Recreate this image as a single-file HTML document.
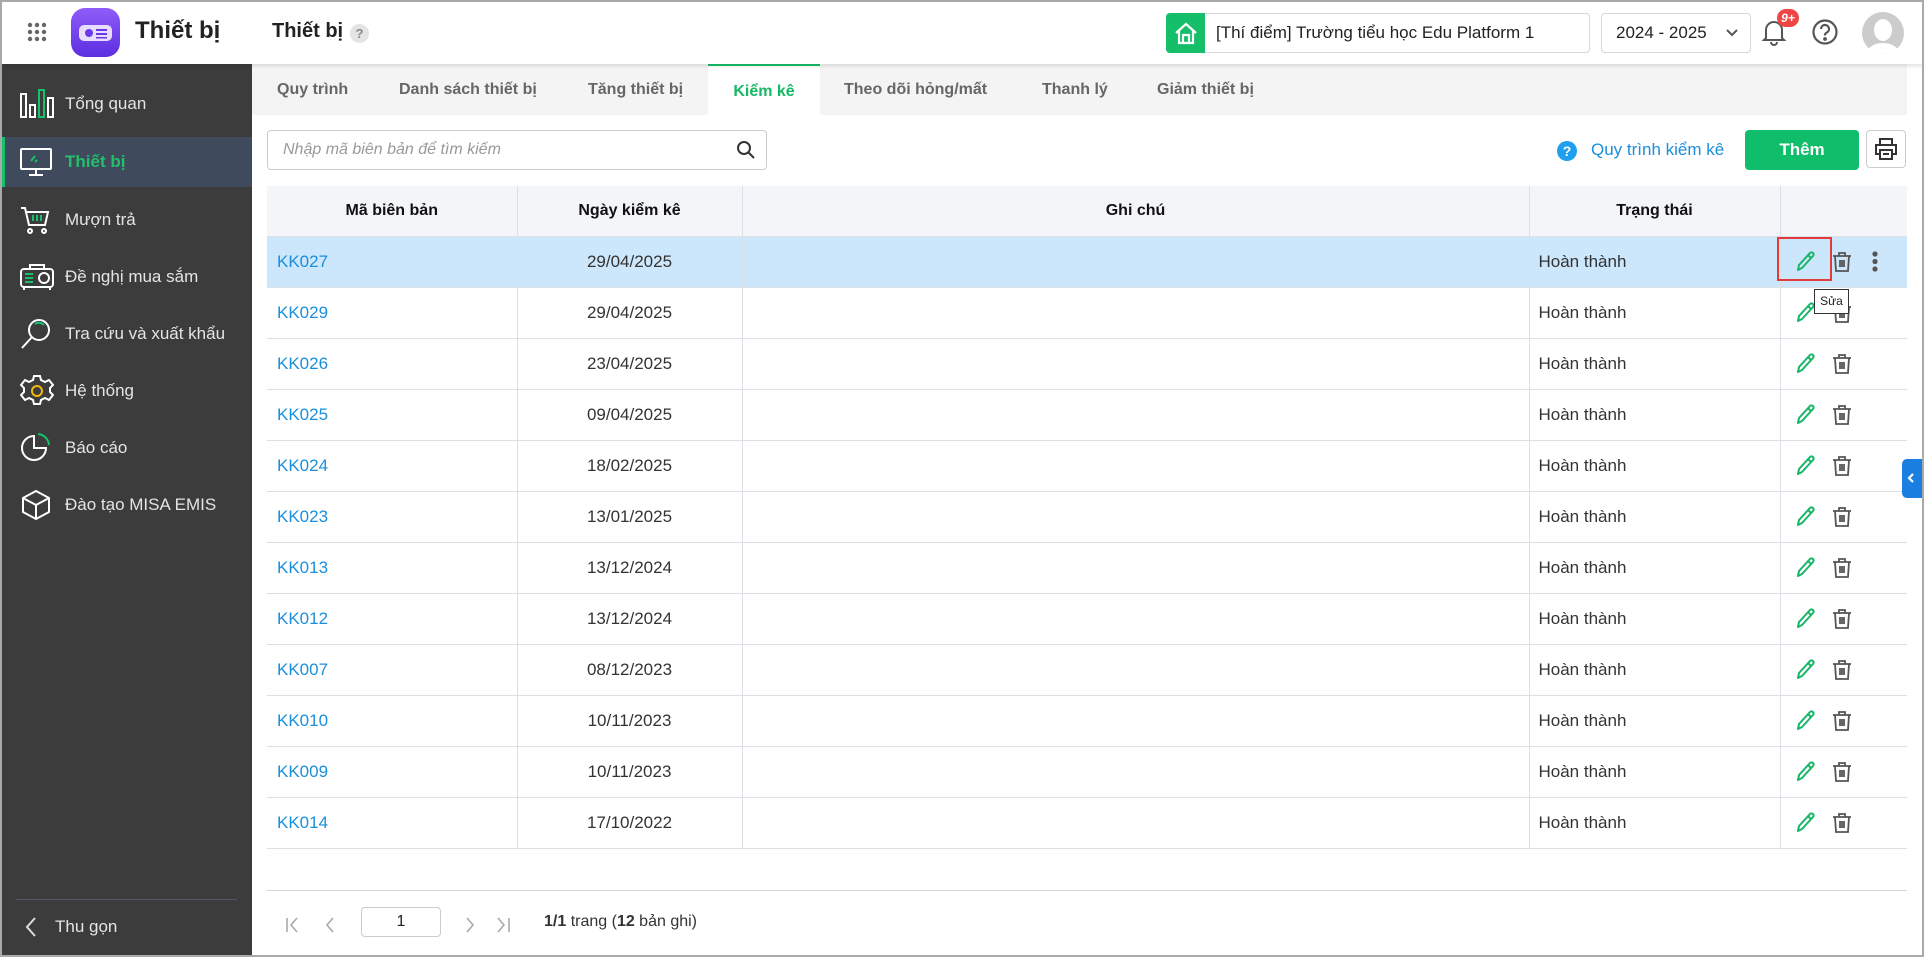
<!DOCTYPE html>
<html><head><meta charset="utf-8">
<style>
*{box-sizing:border-box;margin:0;padding:0}
body{width:1924px;height:957px;overflow:hidden;font-family:"Liberation Sans",sans-serif;background:#fff;position:relative;color:#222}
.abs{position:absolute}
#frame{position:absolute;inset:0;border:2px solid #a9a9a9;pointer-events:none;z-index:50}
#header{left:0;top:0;width:1924px;height:64px;background:#fff;box-shadow:0 2px 4px rgba(0,0,0,.12);z-index:5}
#side{left:0;top:64px;width:252px;height:893px;background:#3c3c3c}
.nav{position:absolute;left:0;width:252px;height:50px;display:flex;align-items:center;color:#e4e4e4;font-size:17px}
.nav svg{position:absolute;left:20px}
.nav span{position:absolute;left:65px}
.nav.act{background:#3f4b5d;color:#22c06a;font-weight:bold;border-left:5px solid #15c26b}
#tabs{left:252px;top:64px;width:1655px;height:51px;background:#f4f4f4}
.tab{position:absolute;top:0;height:51px;line-height:51px;font-size:16px;color:#666;font-weight:bold}
table{border-collapse:collapse;position:absolute;left:267px;top:186px;width:1640px;font-size:17px}
th{background:#f4f5f9;height:50px;font-weight:bold;font-size:16px;color:#111;border-right:1px solid #dcdfe6;border-bottom:1px solid #dcdfe6}
td{height:51px;border-right:1px solid #dcdfe6;border-bottom:1px solid #dcdfe6;color:#333}
th:last-child,td:last-child{border-right:none}
tr.sel td{background:#cce6fb}
td.c1{color:#1a8fdd;padding-left:10px}
td.c2{text-align:center}
td.c4{padding-left:9px;color:#333}
.pen{position:absolute;left:1793px}
.bin{position:absolute;left:1833px}
</style></head><body>
<div id="frame"></div>
<div id="header" class="abs">
  <svg class="abs" style="left:27px;top:22px" width="20" height="20"><g fill="#666"><circle cx="3" cy="3" r="2.2"/><circle cx="10" cy="3" r="2.2"/><circle cx="17" cy="3" r="2.2"/><circle cx="3" cy="10" r="2.2"/><circle cx="10" cy="10" r="2.2"/><circle cx="17" cy="10" r="2.2"/><circle cx="3" cy="17" r="2.2"/><circle cx="10" cy="17" r="2.2"/><circle cx="17" cy="17" r="2.2"/></g></svg>
  <div class="abs" style="left:71px;top:8px;width:49px;height:49px;border-radius:14px;background:linear-gradient(180deg,#8f5cf7,#5b2fe0)"></div>
  <svg class="abs" style="left:79px;top:24px" width="33" height="18"><rect x="0" y="1" width="33" height="16" rx="5" fill="#e8dcff"/><circle cx="10" cy="9" r="4" fill="#6a3ae8"/><rect x="17" y="5" width="11" height="2" fill="#6a3ae8"/><rect x="17" y="9" width="11" height="2" fill="#6a3ae8"/><rect x="17" y="13" width="11" height="1.5" fill="#6a3ae8"/></svg>
  <div class="abs" style="left:135px;top:17px;font-size:24px;font-weight:bold;color:#222">Thiết bị</div>
  <div class="abs" style="left:272px;top:20px;font-size:20px;font-weight:bold;color:#222">Thiết bị</div>
  <div class="abs" style="left:350px;top:24px;width:19px;height:19px;border-radius:50%;background:#e4e4e4;color:#888;font-size:13px;text-align:center;line-height:19px;font-weight:bold">?</div>
  <div class="abs" style="left:1166px;top:13px;width:424px;height:40px;border:1px solid #d6d6d6;border-radius:4px"></div>
  <div class="abs" style="left:1166px;top:13px;width:39px;height:40px;background:#15bf6a;border-radius:4px 0 0 4px"></div>
  <svg class="abs" style="left:1174px;top:21px" width="24" height="24" fill="none" stroke="#fff" stroke-width="2.2"><path d="M2 12 L12 3 L22 12 M5 10 V22 H19 V10 M9 22 V14 H15 V22"/></svg>
  <div class="abs" style="left:1216px;top:23px;font-size:17px;color:#222">[Thí điểm] Trường tiểu học Edu Platform 1</div>
  <div class="abs" style="left:1601px;top:13px;width:150px;height:40px;border:1px solid #d6d6d6;border-radius:4px"></div>
  <div class="abs" style="left:1616px;top:23px;font-size:17px;color:#222">2024 - 2025</div>
  <svg class="abs" style="left:1725px;top:28px" width="14" height="10" fill="none" stroke="#555" stroke-width="2"><path d="M2 2 L7 7 L12 2"/></svg>
  <svg class="abs" style="left:1760px;top:18px" width="28" height="28" fill="none" stroke="#555" stroke-width="2"><path d="M6 20 V12 a8 8 0 0 1 16 0 V20 L24 22 H4 Z M11 24 a3 3 0 0 0 6 0"/></svg>
  <div class="abs" style="left:1777px;top:9px;width:22px;height:18px;border-radius:9px;background:#f04646;color:#fff;font-size:12px;font-weight:bold;text-align:center;line-height:18px;font-style:italic">9+</div>
  <svg class="abs" style="left:1811px;top:18px" width="28" height="28" fill="none" stroke="#555" stroke-width="2.2"><circle cx="14" cy="14" r="11.5"/><path d="M10 11 a4 4 0 1 1 5.5 3.7 c-1.2.6-1.5 1.2-1.5 2.8"/><circle cx="14" cy="21" r="0.8" fill="#555"/></svg>
  <div class="abs" style="left:1862px;top:12px;width:42px;height:42px;border-radius:50%;background:#ccc;overflow:hidden"><div style="position:absolute;left:12px;top:7px;width:18px;height:22px;border-radius:50%;background:#fff"></div><div style="position:absolute;left:4px;top:31px;width:34px;height:24px;border-radius:50%;background:#fff"></div></div>
</div>

<div id="side" class="abs">
  <div class="nav" style="top:15px"><svg width="34" height="30" fill="none" stroke="#fff" stroke-width="2"><rect x="1" y="5" width="5" height="23"/><rect x="10" y="16" width="5" height="12"/><rect x="19" y="1" width="5" height="27" stroke="#15c26b"/><rect x="28" y="9" width="5" height="19"/></svg><span>Tổng quan</span></div>
  <div class="nav act" style="top:73px"><svg width="32" height="28" style="left:15px" fill="none" stroke="#fff" stroke-width="2"><rect x="1" y="1" width="30" height="20" rx="1"/><path d="M16 21 V26 M9 27 H23"/><path d="M11 13 L15 8 M15 14 L17 12" stroke="#15c26b"/></svg><span style="left:60px">Thiết bị</span></div>
  <div class="nav" style="top:131px"><svg width="30" height="30" fill="none" stroke="#fff" stroke-width="2"><path d="M1 3 H5 L9 20 H25 L28 7 H6"/><circle cx="10" cy="26" r="2"/><circle cx="24" cy="26" r="2"/><path d="M13 10 V16 M17 10 V16 M21 10 V16" stroke="#15c26b"/></svg><span>Mượn trả</span></div>
  <div class="nav" style="top:188px"><svg width="34" height="28" fill="none" stroke="#fff" stroke-width="2"><rect x="1" y="6" width="32" height="18" rx="3"/><path d="M10 6 V2 H24 V6 M4 24 V27 M30 24 V27"/><circle cx="24" cy="15" r="5"/><path d="M5 11 H13 M5 15 H13 M5 19 H13" stroke="#15c26b"/></svg><span>Đề nghị mua sắm</span></div>
  <div class="nav" style="top:245px"><svg width="32" height="32" fill="none" stroke="#fff" stroke-width="2"><circle cx="19" cy="12" r="10"/><path d="M12 19 L2 30"/><path d="M15 6 a7 7 0 0 1 9 1" stroke="#15c26b"/></svg><span>Tra cứu và xuất khẩu</span></div>
  <div class="nav" style="top:302px"><svg width="34" height="34" fill="none" stroke="#fff" stroke-width="2"><path d="M14 2 h6 l1 4 l4 2 l4-2 l4 5 l-3 3 v4 l3 3 l-4 5 l-4-2 l-4 2 l-1 4 h-6 l-1-4 l-4-2 l-4 2 l-4-5 l3-3 v-4 l-3-3 l4-5 l4 2 l4-2 z"/><circle cx="17" cy="17" r="5" stroke="#f2b90c"/></svg><span>Hệ thống</span></div>
  <div class="nav" style="top:359px"><svg width="32" height="32" fill="none" stroke="#fff" stroke-width="2"><path d="M14 4 a12 12 0 1 0 12 12 H14 Z"/><path d="M18 2 a12 12 0 0 1 11 11" stroke="#15c26b"/></svg><span>Báo cáo</span></div>
  <div class="nav" style="top:416px"><svg width="32" height="32" fill="none" stroke="#fff" stroke-width="2"><path d="M16 2 L29 9 V23 L16 30 L3 23 V9 Z M3 9 L16 16 L29 9 M16 16 V30"/></svg><span>Đào tạo MISA EMIS</span></div>
  <div class="abs" style="left:16px;top:835px;width:221px;height:1px;background:#4f5864"></div>
  <svg class="abs" style="left:24px;top:852px" width="14" height="22" fill="none" stroke="#ddd" stroke-width="2"><path d="M11 2 L3 11 L11 20"/></svg>
  <div class="abs" style="left:55px;top:853px;font-size:17px;color:#e4e4e4">Thu gọn</div>
</div>

<div id="tabs" class="abs">
  <div class="tab" style="left:25px">Quy trình</div>
  <div class="tab" style="left:147px">Danh sách thiết bị</div>
  <div class="tab" style="left:336px">Tăng thiết bị</div>
  <div class="tab" style="left:456px;width:112px;background:#fff;color:#15b865;text-align:center;border-top:2px solid #15c26b">Kiểm kê</div>
  <div class="tab" style="left:592px">Theo dõi hỏng/mất</div>
  <div class="tab" style="left:790px">Thanh lý</div>
  <div class="tab" style="left:905px">Giảm thiết bị</div>
</div>

<div class="abs" style="left:267px;top:130px;width:500px;height:40px;border:1px solid #ccc;border-radius:4px"></div>
<div class="abs" style="left:283px;top:141px;font-size:16px;font-style:italic;color:#999">Nhập mã biên bản để tìm kiếm</div>
<svg class="abs" style="left:736px;top:140px" width="20" height="20" fill="none" stroke="#333" stroke-width="2"><circle cx="8" cy="8" r="6"/><path d="M12.5 12.5 L18 18"/></svg>

<div class="abs" style="left:1557px;top:141px;width:20px;height:20px;border-radius:50%;background:#1e9ff0;color:#fff;font-size:14px;font-weight:bold;text-align:center;line-height:20px">?</div>
<div class="abs" style="left:1591px;top:140px;font-size:17px;color:#1a8fdd">Quy trình kiểm kê</div>
<div class="abs" style="left:1745px;top:130px;width:114px;height:40px;border-radius:4px;background:#10bd6b;color:#fff;font-weight:bold;font-size:17px;text-align:center;line-height:40px">Thêm</div>
<div class="abs" style="left:1866px;top:130px;width:40px;height:38px;border:1px solid #ccc;border-radius:4px"></div>
<svg class="abs" style="left:1874px;top:137px" width="24" height="24" fill="none" stroke="#333" stroke-width="2"><path d="M6 8 V2 H18 V8 M6 17 H2 V8 H22 V17 H18"/><rect x="6" y="13" width="12" height="9"/><path d="M9 17 H15"/></svg>

<table>
<tr><th style="width:250px">Mã biên bản</th><th style="width:225px">Ngày kiểm kê</th><th style="width:787px">Ghi chú</th><th style="width:251px">Trạng thái</th><th></th></tr>
<tr class="sel"><td class="c1">KK027</td><td class="c2">29/04/2025</td><td></td><td class="c4">Hoàn thành</td><td></td></tr>
<tr><td class="c1">KK029</td><td class="c2">29/04/2025</td><td></td><td class="c4">Hoàn thành</td><td></td></tr>
<tr><td class="c1">KK026</td><td class="c2">23/04/2025</td><td></td><td class="c4">Hoàn thành</td><td></td></tr>
<tr><td class="c1">KK025</td><td class="c2">09/04/2025</td><td></td><td class="c4">Hoàn thành</td><td></td></tr>
<tr><td class="c1">KK024</td><td class="c2">18/02/2025</td><td></td><td class="c4">Hoàn thành</td><td></td></tr>
<tr><td class="c1">KK023</td><td class="c2">13/01/2025</td><td></td><td class="c4">Hoàn thành</td><td></td></tr>
<tr><td class="c1">KK013</td><td class="c2">13/12/2024</td><td></td><td class="c4">Hoàn thành</td><td></td></tr>
<tr><td class="c1">KK012</td><td class="c2">13/12/2024</td><td></td><td class="c4">Hoàn thành</td><td></td></tr>
<tr><td class="c1">KK007</td><td class="c2">08/12/2023</td><td></td><td class="c4">Hoàn thành</td><td></td></tr>
<tr><td class="c1">KK010</td><td class="c2">10/11/2023</td><td></td><td class="c4">Hoàn thành</td><td></td></tr>
<tr><td class="c1">KK009</td><td class="c2">10/11/2023</td><td></td><td class="c4">Hoàn thành</td><td></td></tr>
<tr><td class="c1">KK014</td><td class="c2">17/10/2022</td><td></td><td class="c4">Hoàn thành</td><td></td></tr>
</table>

<svg class="abs" style="left:1790px;top:236px" width="100" height="612" fill="none">
<g stroke="#17b567" stroke-width="2" stroke-linejoin="round">
<path d="M8 34 L9 29 L20 17 a2 2 0 0 1 3 3 L12 32 Z M18 19 L21 22"/>
<path d="M8 85 L9 80 L20 68 a2 2 0 0 1 3 3 L12 83 Z M18 70 L21 73"/>
<path d="M8 136 L9 131 L20 119 a2 2 0 0 1 3 3 L12 134 Z M18 121 L21 124"/>
<path d="M8 187 L9 182 L20 170 a2 2 0 0 1 3 3 L12 185 Z M18 172 L21 175"/>
<path d="M8 238 L9 233 L20 221 a2 2 0 0 1 3 3 L12 236 Z M18 223 L21 226"/>
<path d="M8 289 L9 284 L20 272 a2 2 0 0 1 3 3 L12 287 Z M18 274 L21 277"/>
<path d="M8 340 L9 335 L20 323 a2 2 0 0 1 3 3 L12 338 Z M18 325 L21 328"/>
<path d="M8 391 L9 386 L20 374 a2 2 0 0 1 3 3 L12 389 Z M18 376 L21 379"/>
<path d="M8 442 L9 437 L20 425 a2 2 0 0 1 3 3 L12 440 Z M18 427 L21 430"/>
<path d="M8 493 L9 488 L20 476 a2 2 0 0 1 3 3 L12 491 Z M18 478 L21 481"/>
<path d="M8 544 L9 539 L20 527 a2 2 0 0 1 3 3 L12 542 Z M18 529 L21 532"/>
<path d="M8 595 L9 590 L20 578 a2 2 0 0 1 3 3 L12 593 Z M18 580 L21 583"/>
</g>
<g stroke="#555" stroke-width="1.8">
<path d="M43 20 H61 M49 20 V17 H55 V20 M45 20 L46 35 H58 L59 20 M50 24 V31 M52 24 V31 M54 24 V31"/>
<path transform="translate(0,51)" d="M43 20 H61 M49 20 V17 H55 V20 M45 20 L46 35 H58 L59 20 M50 24 V31 M52 24 V31 M54 24 V31"/>
<path transform="translate(0,102)" d="M43 20 H61 M49 20 V17 H55 V20 M45 20 L46 35 H58 L59 20 M50 24 V31 M52 24 V31 M54 24 V31"/>
<path transform="translate(0,153)" d="M43 20 H61 M49 20 V17 H55 V20 M45 20 L46 35 H58 L59 20 M50 24 V31 M52 24 V31 M54 24 V31"/>
<path transform="translate(0,204)" d="M43 20 H61 M49 20 V17 H55 V20 M45 20 L46 35 H58 L59 20 M50 24 V31 M52 24 V31 M54 24 V31"/>
<path transform="translate(0,255)" d="M43 20 H61 M49 20 V17 H55 V20 M45 20 L46 35 H58 L59 20 M50 24 V31 M52 24 V31 M54 24 V31"/>
<path transform="translate(0,306)" d="M43 20 H61 M49 20 V17 H55 V20 M45 20 L46 35 H58 L59 20 M50 24 V31 M52 24 V31 M54 24 V31"/>
<path transform="translate(0,357)" d="M43 20 H61 M49 20 V17 H55 V20 M45 20 L46 35 H58 L59 20 M50 24 V31 M52 24 V31 M54 24 V31"/>
<path transform="translate(0,408)" d="M43 20 H61 M49 20 V17 H55 V20 M45 20 L46 35 H58 L59 20 M50 24 V31 M52 24 V31 M54 24 V31"/>
<path transform="translate(0,459)" d="M43 20 H61 M49 20 V17 H55 V20 M45 20 L46 35 H58 L59 20 M50 24 V31 M52 24 V31 M54 24 V31"/>
<path transform="translate(0,510)" d="M43 20 H61 M49 20 V17 H55 V20 M45 20 L46 35 H58 L59 20 M50 24 V31 M52 24 V31 M54 24 V31"/>
<path transform="translate(0,561)" d="M43 20 H61 M49 20 V17 H55 V20 M45 20 L46 35 H58 L59 20 M50 24 V31 M52 24 V31 M54 24 V31"/>
</g>
<circle cx="85" cy="18" r="2.6" fill="#555"/><circle cx="85" cy="25.5" r="2.6" fill="#555"/><circle cx="85" cy="33" r="2.6" fill="#555"/>
</svg>
<div class="abs" style="left:1777px;top:237px;width:55px;height:44px;border:2px solid #e23b3b"></div>
<div class="abs" style="left:1814px;top:289px;width:35px;height:25px;border:1px solid #333;background:#fff;font-size:12px;text-align:center;line-height:23px;color:#222">Sửa</div>

<div class="abs" style="left:1902px;top:459px;width:20px;height:39px;background:#1a7fe0;border-radius:5px 0 0 5px"></div>
<svg class="abs" style="left:1906px;top:472px" width="10" height="12" fill="none" stroke="#fff" stroke-width="2.2"><path d="M7 2 L3 6 L7 10"/></svg>

<div class="abs" style="left:267px;top:890px;width:1640px;height:1px;background:#d6d6d6"></div>
<svg class="abs" style="left:285px;top:914px" width="240" height="22" fill="none" stroke="#aaa" stroke-width="1.6"><path d="M2 4 V18 M12 4 L6 11 L12 18 M48 4 L42 11 L48 18 M182 4 L188 11 L182 18 M213 4 L219 11 L213 18 M224 4 V18"/></svg>
<div class="abs" style="left:361px;top:907px;width:80px;height:30px;border:1px solid #ccc;border-radius:4px;text-align:center;line-height:28px;font-size:16px;color:#222">1</div>
<div class="abs" style="left:544px;top:913px;font-size:16px;color:#333"><b>1/1</b> trang (<b>12</b> bản ghi)</div>
</body></html>
